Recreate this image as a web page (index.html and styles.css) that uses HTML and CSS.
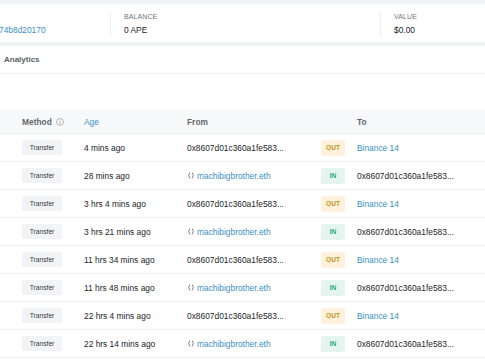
FILE: index.html
```html
<!DOCTYPE html>
<html lang="en">
<head>
  <meta charset="UTF-8">
  <meta name="viewport" content="width=device-width, initial-scale=1.0">
  <title>Address Overview</title>
  <link rel="stylesheet" href="styles.css">
</head>
<body>

  <!-- Overview strip -->
  <div class="overview">
    <div class="stat stat-address">
      <a class="link address-link" href="#">74b8d20170</a>
    </div>
    <div class="stat stat-balance">
      <div class="stat-label">BALANCE</div>
      <div class="stat-value">0 APE</div>
    </div>
    <div class="stat stat-worth">
      <div class="stat-label">VALUE</div>
      <div class="stat-value">$0.00</div>
    </div>
  </div>

  <!-- Transactions card -->
  <div class="card">
    <div class="tabs">
      <span class="tab">Analytics</span>
    </div>
    <div class="card-spacer"></div>

    <div class="tx-table">
      <div class="tx-head">
        <div class="th">Method
          <svg class="info-icon" viewBox="0 0 10 10" width="8" height="8">
            <circle cx="5" cy="5" r="4.3" fill="none" stroke="#8a9096" stroke-width="0.8"/>
            <line x1="5" y1="4.3" x2="5" y2="7.4" stroke="#8a9096" stroke-width="0.9"/>
            <circle cx="5" cy="2.9" r="0.55" fill="#8a9096"/>
          </svg>
        </div>
        <div class="th th-link">Age</div>
        <div class="th">From</div>
        <div class="th"></div>
        <div class="th">To</div>
      </div>
      <div id="tx-rows"></div>
    </div>
  </div>

  <script>
    // Recent transfers shown in the table
    const addr = "0x8607d01c360a1fe583...";
    const txs = [
      { age: "4 mins ago", dir: "out" },
      { age: "28 mins ago", dir: "in" },
      { age: "3 hrs 4 mins ago", dir: "out" },
      { age: "3 hrs 21 mins ago", dir: "in" },
      { age: "11 hrs 34 mins ago", dir: "out" },
      { age: "11 hrs 48 mins ago", dir: "in" },
      { age: "22 hrs 4 mins ago", dir: "out" },
      { age: "22 hrs 14 mins ago", dir: "in" }
    ];

    const ensIcon = '<svg class="ens-icon" viewBox="0 0 9 8" width="8" height="7">' +
      '<path d="M3.2 0.8 Q0.4 4 3.2 7.2" fill="none" stroke="#747b81" stroke-width="1.1"/>' +
      '<path d="M5.8 0.8 Q8.6 4 5.8 7.2" fill="none" stroke="#747b81" stroke-width="1.1"/></svg>';

    function renderRows() {
      let html = "";
      txs.forEach(function (tx) {
        const isOut = tx.dir === "out";
        const from = isOut
          ? '<span>' + addr + '</span>'
          : ensIcon + '<a class="link" href="#">machibigbrother.eth</a>';
        const to = isOut
          ? '<a class="link" href="#">Binance 14</a>'
          : '<span>' + addr + '</span>';
        html += '<div class="tx-row">' +
          '<div class="td"><span class="method-badge">Transfer</span></div>' +
          '<div class="td">' + tx.age + '</div>' +
          '<div class="td">' + from + '</div>' +
          '<div class="td"><span class="dir-badge ' + tx.dir + '">' + tx.dir.toUpperCase() + '</span></div>' +
          '<div class="td">' + to + '</div>' +
          '</div>';
      });
      document.getElementById("tx-rows").innerHTML = html;
    }

    renderRows();
  </script>

</body>
</html>
```

FILE: styles.css
```css
/* General Page Styling */
body {
  margin: 0;
  padding-top: 4px;
  background-color: #f2f3f5;
  font-family: "Liberation Sans", Arial, sans-serif;
  font-size: 8.4px;
  color: #212529;
  overflow: hidden;
}

.link {
  color: #3a8fc6;
  text-decoration: none;
}

/* Overview strip */
.overview {
  display: flex;
  background-color: #ffffff;
  height: 38px;
  padding: 8px 0 5px;
  box-sizing: border-box;
  margin-bottom: 4px;
}

.stat {
  box-sizing: border-box;
}

.stat-address {
  width: 110px;
  padding-top: 13px;
  line-height: 10px;
}

.address-link {
  margin-left: -1px;
}

.stat-balance {
  width: 270px;
  border-left: 1px solid #eceef1;
  padding-left: 13px;
}

.stat-worth {
  flex: 1;
  border-left: 1px solid #eceef1;
  padding-left: 13px;
}

.stat-label {
  font-size: 7px;
  line-height: 9px;
  color: #6c757d;
  letter-spacing: 0.1px;
}

.stat-value {
  margin-top: 4px;
  line-height: 10px;
}

/* Card */
.card {
  background-color: #ffffff;
  min-height: 320px;
}

.tabs {
  height: 27px;
  border-bottom: 1px solid #eceef1;
  display: flex;
  align-items: center;
  padding-left: 4px;
}

.tab {
  font-weight: bold;
  font-size: 8px;
  color: #5c6267;
}

.card-spacer {
  height: 36px;
}

/* Transactions table */
.tx-head,
.tx-row {
  display: grid;
  grid-template-columns: 62px 103px 134px 36px 1fr;
  padding-left: 22px;
  border-bottom: 1px solid #eceef1;
  align-items: center;
}

.tx-head {
  height: 23px;
  background-color: #f8f9fa;
}

.th {
  font-weight: bold;
  color: #62686e;
  white-space: nowrap;
  display: flex;
  align-items: center;
}

.th-link {
  color: #3a8fc6;
  font-weight: normal;
}

.info-icon {
  margin-left: 4px;
}

.tx-row {
  height: 27px;
}

.td {
  white-space: nowrap;
  display: flex;
  align-items: center;
}

.method-badge {
  display: inline-block;
  width: 40px;
  height: 15px;
  line-height: 15px;
  text-align: center;
  font-size: 6.7px;
  background-color: #f1f3f6;
  border-radius: 3px;
  color: #343a40;
}

.ens-icon {
  margin-right: 2px;
}

.dir-badge {
  display: inline-block;
  width: 24px;
  height: 16px;
  line-height: 16px;
  text-align: center;
  font-size: 6.6px;
  font-weight: bold;
  border-radius: 3px;
  box-sizing: border-box;
}

.dir-badge.out {
  background-color: #fcf1da;
  color: #c7961a;
}

.dir-badge.in {
  background-color: #e4f4ee;
  color: #2aa889;
}
```
